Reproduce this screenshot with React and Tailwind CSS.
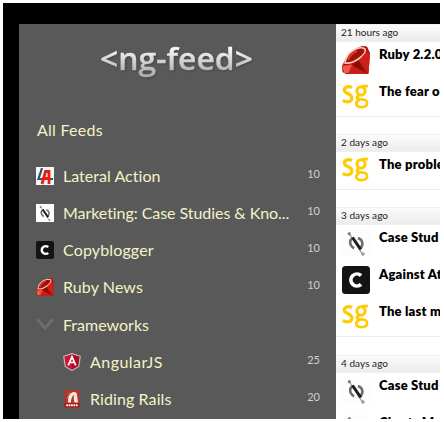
function Ruby({ className }) {
  return (
    <svg viewBox="0 0 28 28" className={className}>
      <path d="M0 20 3 14 7 8 13 3 20 0 25 .5 28 7 26.5 28 4 28 .5 26Z" fill="#b5120d" />
      <path d="M3 17Q4 9 11 4.5T23 3Q24.5 7 17 12.5T3 17Z" fill="#a3100a" stroke="#f9c8bf" strokeWidth="1.6" />
      <path d="M6 14Q8 8 15 5" stroke="#d8382c" strokeWidth="2" fill="none" />
      <path d="M24.5 6 28 8 26.5 27 17.5 14Z" fill="#cf2119" />
      <path d="M17 14 26 27 10 20Z" fill="#8a0c07" />
      <path d="M.5 20 10 18.5 7 27 2 27Z" fill="#ee5a48" />
      <path d="M10 19 25 28 6 28Z" fill="#c91d16" />
      <path d="M17 14 25 27M10 19 6 27" stroke="#e8483a" strokeWidth=".6" />
    </svg>
  );
}

function Slashed({ className }) {
  return (
    <svg viewBox="0 0 28 28" className={className}>
      <rect width="28" height="28" fill="#fdfdfd" />
      <g fill="none" stroke="#6a6f6f" strokeWidth="2.5">
        <path d="M12 9C7 10 6.5 15.5 12 19.5" />
        <path d="M16 9C21.5 11 21.5 16.5 18 19.5" />
      </g>
      <path d="M7.5 5 21 26" stroke="#8a8a8a" strokeWidth="1.1" />
      <path d="M10.5 8.5 18.8 20.5" stroke="#1c1f1f" strokeWidth="3" />
      <circle cx="7.3" cy="4.7" r="1.6" fill="#808080" />
      <circle cx="21" cy="25" r="1.7" fill="#999" />
    </svg>
  );
}

function Copy({ className }) {
  return (
    <svg viewBox="0 0 28 28" className={className}>
      <rect width="28" height="28" rx="3.5" fill="#131313" />
      <path d="M19 9.6A6 6 0 1 0 19 18.4" fill="none" stroke="#fff" strokeWidth="3.7" />
    </svg>
  );
}

function Lateral({ className }) {
  return (
    <svg viewBox="0 0 18 18" className={className}>
      <rect width="18" height="18" fill="#f6f8f8" />
      <path d="M6 1 2.5 12H17" fill="none" stroke="#26596b" strokeWidth="2.2" />
      <path d="M6 17 9.5 4.5H13V17M7.5 11.5H13" fill="none" stroke="#ed1c12" strokeWidth="2.8" />
    </svg>
  );
}

function Angular({ className }) {
  return (
    <svg viewBox="0 0 18 18" className={className}>
      <path d="M9 .6 17.2 3.3 15.8 13.5 9 17.4 2.2 13.5 .8 3.3Z" fill="#d0142f" stroke="#bdbdbd" strokeWidth="1.2" />
      <path d="M9 1.5 16.3 4 15 13 9 16.5Z" fill="#a90e29" />
      <path d="M5.2 12.4 9 3.8 12.8 12.4M6.8 9.5H11.2" fill="none" stroke="#fff" strokeWidth="1.7" />
    </svg>
  );
}

function Rails({ className }) {
  return (
    <svg viewBox="0 0 18 18" className={className}>
      <rect x="1.5" width="15" height="18" rx="1" fill="#b8332a" />
      <path d="M5 12.5Q4.5 4 10 2Q14 1.5 14 5L15 12.5H11.5Q10 8 11.5 5Q8 6 8 12.5Z" fill="#f6e8de" />
      <path d="M5.5 4.5 7.5 3M4.5 8 5.5 6" stroke="#dd9484" />
      <path d="M1.5 13H16.5V17.5H1.5Z" fill="#9a1c1b" />
      <path d="M3.3 15.2H14.7" stroke="#fff" strokeWidth="2" strokeDasharray="1.7 .7" />
    </svg>
  );
}

function Sg({ className }) {
  return (
    <svg viewBox="0 0 28 28" className={className} fill="none" stroke="#ffcb05">
      <rect width="28" height="28" fill="#fff" stroke="none" />
      <path d="M10 4.7C7 2.8 2.4 3.7 2.3 7.1C2.2 10.8 10 10.4 9.9 15C9.8 19.6 4 19.7 .8 17.4" strokeWidth="3.2" />
      <ellipse cx="19" cy="8" rx="4.1" ry="4.3" strokeWidth="3.1" />
      <path d="M20 3.2H26M17 12.5C13 14.5 15 16.2 19 16.3C24 16.4 25.5 18 25 21C24.4 25 15.4 25 14.4 21.6C13.8 19 16 17.4 17.5 16.5" strokeWidth="2.7" />
    </svg>
  );
}

const feeds = [
  { icon: Lateral, name: "Lateral Action", count: 10, fit: "tracking-[0.03px]" },
  { icon: Slashed, name: "Marketing: Case Studies & Kno...", count: 10, fit: "tracking-[-0.06px]" },
  { icon: Copy, name: "Copyblogger", count: 10, fit: "tracking-[0.15px]" },
  { icon: Ruby, name: "Ruby News", count: 10, fit: "tracking-[0.1px]" },
];

const groups = [
  { age: "21 hours ago", fit: "tracking-[0px]", items: [[Ruby, "Ruby 2.2.0"], [Sg, "The fear o"]], size: "h-[110px]" },
  { age: "2 days ago", fit: "tracking-[0.05px]", items: [[Sg, "The proble"]], size: "h-[73px]" },
  { age: "3 days ago", fit: "tracking-[0.05px]", items: [[Slashed, "Case Stud"], [Copy, "Against At"], [Sg, "The last m"]], size: "h-[148px]" },
  { age: "4 days ago", fit: "tracking-[0.05px]", items: [[Slashed, "Case Stud"], [Slashed, "Charts M"]], size: "h-[110px]" },
];

function Feed({ icon: Icon, name, count, fit }) {
  return (
    <li className="flex h-[37px] items-center">
      <Icon className="h-[18px] w-[18px] shrink-0" />
      <span className={`ml-[9px] flex-1 whitespace-nowrap ${fit}`}>{name}</span>
      <span className="pb-[2px] font-['Lato',sans-serif] text-[11px] text-[#d0d0d0]">{count}</span>
    </li>
  );
}

export default function App() {
  return (
    <div className="h-[422px] w-[444px] overflow-hidden bg-white pl-[3px] pt-[3px] font-['Lato',sans-serif]">
      <div className="flex h-[416px] w-[437px] overflow-hidden bg-black pl-4 pt-[21px]">
        <aside className="h-[395px] w-[317px] shrink-0 overflow-hidden bg-[#595959] pl-[17px] pr-[16px] text-[16px] text-[#f3f3c8]">
          <h1 className="flex h-[88px] pl-[64px] pt-[14px]">
            <svg width="156" height="48" viewBox="0 0 156 48" className="overflow-visible">
              <defs>
                <linearGradient id="metal" x1="0" y1="0" x2="0" y2="1">
                  <stop offset=".25" stopColor="#fafafa" />
                  <stop offset=".85" stopColor="#b0b0b0" />
                </linearGradient>
              </defs>
              <text x="0" y="32" textLength="153" lengthAdjust="spacingAndGlyphs" fill="url(#metal)" stroke="url(#metal)" strokeWidth=".3" className="font-['Open_Sans',sans-serif] text-[31px] font-semibold [filter:drop-shadow(1px_1px_1px_#3338)]">&lt;ng-feed&gt;</text>
            </svg>
          </h1>
          <div className="flex h-[45px] items-start pl-px pt-[6px] leading-6 tracking-[0.25px]">All Feeds</div>
          <ul>
            {feeds.map((feed) => <Feed key={feed.name} {...feed} />)}
            <li className="flex h-[38px] items-center">
              <svg width="18" height="14" viewBox="0 0 18 14" fill="none" stroke="#6d6d6d" strokeWidth="3"><path d="m1 2 8 9 8-9" /></svg>
              <span className="ml-[9px] pt-px">Frameworks</span>
            </li>
            <li>
              <ul className="pl-[27px]">
                <Feed icon={Angular} name="AngularJS" count={25} fit="tracking-[0.45px]" />
                <Feed icon={Rails} name="Riding Rails" count={20} fit="tracking-[0.1px]" />
              </ul>
            </li>
          </ul>
        </aside>
        <main className="h-[395px] min-w-0 flex-1 overflow-hidden bg-white">
          {groups.map(({ age, fit, items, size }) => (
            <section key={age} className={`overflow-hidden ${size}`}>
              <h2 className={`h-[18px] border-y border-[#f0f0f0] bg-linear-to-b from-[#fbfbfb] to-[#ececec] pl-[5px] text-[10px] leading-[15px] text-[#222] ${fit}`}>{age}</h2>
              <ul className="border-b border-[#eee]">
                {items.map(([Icon, title]) => (
                  <li key={title} className="flex h-[37px] pl-[6px] pt-[3px]">
                    <Icon className="mt-px h-7 w-7 shrink-0" />
                    <span className="ml-[9px] whitespace-nowrap text-[13px] font-extrabold leading-[18px] tracking-[0.2px] text-black">{title}</span>
                  </li>
                ))}
              </ul>
            </section>
          ))}
        </main>
      </div>
    </div>
  );
}
